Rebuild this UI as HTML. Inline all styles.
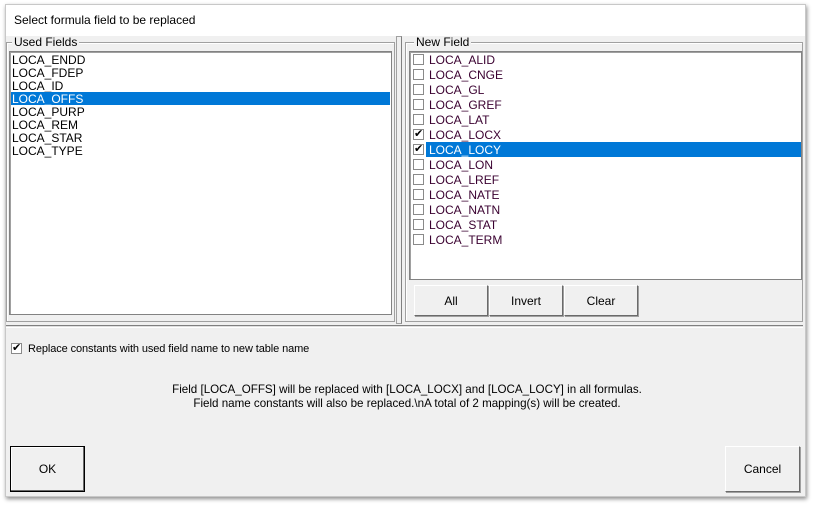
<!DOCTYPE html>
<html><head><style>
*{margin:0;padding:0;box-sizing:border-box}
body{width:814px;height:506px;background:#fff;font-family:"Liberation Sans",sans-serif;font-size:12px;color:#000;position:relative;overflow:hidden}
.win{position:absolute;left:5px;top:4px;width:801px;height:493px;background:#f0f0f0;box-shadow:1px 2px 4px rgba(0,0,0,.45);border:1px solid #c8c8c8}
.title{position:absolute;left:0;top:0;width:100%;height:31px;background:#fff;padding:8px 0 0 8px;font-size:12px}
.abs{position:absolute}
.gb{position:absolute;border:1px solid #a0a0a0;box-shadow:inset 1px 1px 0 #fff}
.lbl{position:absolute;background:#f0f0f0;padding:0 2px;top:-7px;left:6px;line-height:13px;color:#000}
.list{position:absolute;background:#fff;border:1px solid #828282;box-shadow:inset 1px 1px 0 #a0a0a0}
.r{position:absolute;left:1px;right:1px;height:13px;line-height:14px;padding-left:1px}
.sel{background:#0078d7;color:#fff}
.cr{position:absolute;left:426px;width:375px;height:15px;line-height:16px;padding-left:3px;color:#3a0030}
.cb{position:absolute;left:413px;width:11px;height:11px;border:1px solid #8a8a8a;background:#fff;font-size:11px;line-height:9px;text-align:center;color:#000}
.btn{position:absolute;background:#f0f0f0;border:1px solid;border-color:#fff #6a6a6a #6a6a6a #fff;box-shadow:1px 1px 0 #a0a0a0;text-align:center;font-size:12px}
</style></head><body>
<div class="win">
<div class="title">Select formula field to be replaced</div>
</div>
<div class="gb" style="left:6px;top:42px;width:389px;height:280px"><div class="lbl" style="left:5px">Used Fields</div></div>
<div class="list" style="left:9px;top:51px;width:383px;height:264px">
<div class="r" style="top:1px">LOCA_ENDD</div>
<div class="r" style="top:14px">LOCA_FDEP</div>
<div class="r" style="top:27px">LOCA_ID</div>
<div class="r sel" style="top:40px">LOCA_OFFS</div>
<div class="r" style="top:53px">LOCA_PURP</div>
<div class="r" style="top:66px">LOCA_REM</div>
<div class="r" style="top:79px">LOCA_STAR</div>
<div class="r" style="top:92px">LOCA_TYPE</div>
</div>
<div class="abs" style="left:396px;top:36px;width:6px;height:288px;border:1px solid #a0a0a0;border-right-color:#808080;background:#f0f0f0"></div>
<div class="gb" style="left:405px;top:42px;width:398px;height:280px"><div class="lbl" style="left:8px">New Field</div></div>
<div class="list" style="left:409px;top:51px;width:393px;height:229px"></div>
<div class="cr sel" style="top:142px;color:#fff">LOCA_LOCY</div>
<div style="position:absolute;top:52px;left:0">
<div class="cb" style="top:2px"></div><div class="cr" style="top:0">LOCA_ALID</div>
<div class="cb" style="top:17px"></div><div class="cr" style="top:15px">LOCA_CNGE</div>
<div class="cb" style="top:32px"></div><div class="cr" style="top:30px">LOCA_GL</div>
<div class="cb" style="top:47px"></div><div class="cr" style="top:45px">LOCA_GREF</div>
<div class="cb" style="top:62px"></div><div class="cr" style="top:60px">LOCA_LAT</div>
<div class="cb" style="top:77px">✔</div><div class="cr" style="top:75px">LOCA_LOCX</div>
<div class="cb" style="top:92px">✔</div>
<div class="cb" style="top:107px"></div><div class="cr" style="top:105px">LOCA_LON</div>
<div class="cb" style="top:122px"></div><div class="cr" style="top:120px">LOCA_LREF</div>
<div class="cb" style="top:137px"></div><div class="cr" style="top:135px">LOCA_NATE</div>
<div class="cb" style="top:152px"></div><div class="cr" style="top:150px">LOCA_NATN</div>
<div class="cb" style="top:167px"></div><div class="cr" style="top:165px">LOCA_STAT</div>
<div class="cb" style="top:182px"></div><div class="cr" style="top:180px">LOCA_TERM</div>
</div>
<div class="btn" style="left:414px;top:285px;width:74px;height:31px;line-height:31px">All</div>
<div class="btn" style="left:489px;top:285px;width:74px;height:31px;line-height:31px">Invert</div>
<div class="btn" style="left:564px;top:285px;width:74px;height:31px;line-height:31px">Clear</div>
<div class="abs" style="left:6px;top:325px;width:797px;height:3px;border-top:1px solid #808080;border-bottom:1px solid #fff;background:#e0e0e0"></div>
<div class="cb" style="left:11px;top:343px">✔</div>
<div class="abs" style="left:28px;top:342px;line-height:14px;font-size:11px;letter-spacing:-0.1px">Replace constants with used field name to new table name</div>
<div class="abs" style="left:0;width:814px;top:383px;text-align:center;line-height:14px;font-size:11.6px">Field [LOCA_OFFS] will be replaced with [LOCA_LOCX] and [LOCA_LOCY] in all formulas.<br>Field name constants will also be replaced.\nA total of 2 mapping(s) will be created.</div>
<div class="btn" style="left:10px;top:446px;width:75px;height:46px;line-height:44px;border:1px solid #000;box-shadow:inset -1px -1px 0 #6a6a6a,inset 1px 1px 0 #fff">OK</div>
<div class="btn" style="left:725px;top:446px;width:75px;height:46px;line-height:44px">Cancel</div>
</body></html>
